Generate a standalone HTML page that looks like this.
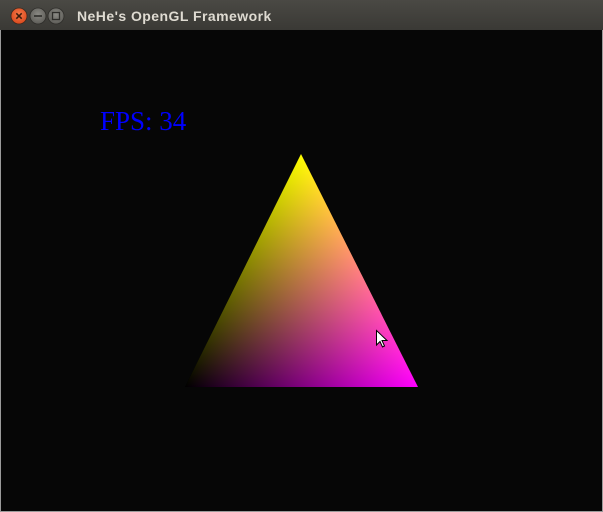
<!DOCTYPE html>
<html><head><meta charset="utf-8">
<style>
html,body{margin:0;padding:0;background:#000;}
body{width:603px;height:512px;overflow:hidden;position:relative;}
svg{display:block;}
</style></head>
<body>
<svg width="603" height="512" viewBox="0 0 603 512" xmlns="http://www.w3.org/2000/svg">
<defs>
<linearGradient id="tb" x1="0" y1="0" x2="0" y2="1">
<stop offset="0" stop-color="#4a4944"/><stop offset="1" stop-color="#3a3935"/>
</linearGradient>
<linearGradient id="gr" gradientUnits="userSpaceOnUse" x1="185" y1="387" x2="371.1" y2="293.6">
<stop offset="0" stop-color="#000"/><stop offset="1" stop-color="#f00"/>
</linearGradient>
<linearGradient id="gg" gradientUnits="userSpaceOnUse" x1="301" y1="154" x2="301" y2="387">
<stop offset="0" stop-color="#0f0"/><stop offset="1" stop-color="#000"/>
</linearGradient>
<linearGradient id="gb" gradientUnits="userSpaceOnUse" x1="231.1" y1="294.3" x2="418" y2="387">
<stop offset="0" stop-color="#000"/><stop offset="1" stop-color="#00f"/>
</linearGradient>
<radialGradient id="cl" cx="0.5" cy="0.4" r="0.6">
<stop offset="0" stop-color="#f57a4a"/><stop offset="1" stop-color="#d9481c"/>
</radialGradient>
<radialGradient id="gy" cx="0.5" cy="0.4" r="0.6">
<stop offset="0" stop-color="#8a8984"/><stop offset="1" stop-color="#5e5d58"/>
</radialGradient>
</defs>
<rect x="0" y="0" width="603" height="512" fill="#060606"/>
<rect x="0" y="0" width="603" height="30" fill="url(#tb)"/>
<rect x="0" y="30" width="1" height="482" fill="#9a9a9a"/>
<rect x="602" y="30" width="1" height="482" fill="#9a9a9a"/>
<rect x="0" y="511" width="603" height="1" fill="#9a9a9a"/>
<circle cx="19" cy="16" r="8" fill="url(#cl)" stroke="#3a2a20" stroke-width="0.8"/>
<path d="M16.3 13.3 L21.7 18.7 M21.7 13.3 L16.3 18.7" stroke="#3a1c0c" stroke-width="1.5"/>
<circle cx="38" cy="16" r="8" fill="url(#gy)" stroke="#2e2d2a" stroke-width="0.8"/>
<rect x="34" y="15.2" width="8" height="1.6" fill="#2e2d2a"/>
<circle cx="56" cy="16" r="8" fill="url(#gy)" stroke="#2e2d2a" stroke-width="0.8"/>
<rect x="52.5" y="12.5" width="7" height="7" fill="none" stroke="#2e2d2a" stroke-width="1.3"/>
<text x="77" y="21" font-family="Liberation Sans, sans-serif" font-weight="bold" font-size="14" letter-spacing="0.45" fill="#dfdbd2">NeHe's OpenGL Framework</text>
<text x="100" y="130" font-family="Liberation Serif, serif" font-size="27" fill="#0000ff">FPS: 34</text>
<g style="isolation:isolate">
<polygon points="301,154 418,387 185,387" fill="url(#gr)"/>
<polygon points="301,154 418,387 185,387" fill="url(#gg)" style="mix-blend-mode:screen"/>
<polygon points="301,154 418,387 185,387" fill="url(#gb)" style="mix-blend-mode:screen"/>
</g>
<path d="M376.5 330.5 L376.5 345 L380 341.5 L382.5 347 L384.5 346 L382 340.5 L387 340.5 Z" fill="#fff" stroke="#000" stroke-width="1"/>
</svg>
</body></html>
